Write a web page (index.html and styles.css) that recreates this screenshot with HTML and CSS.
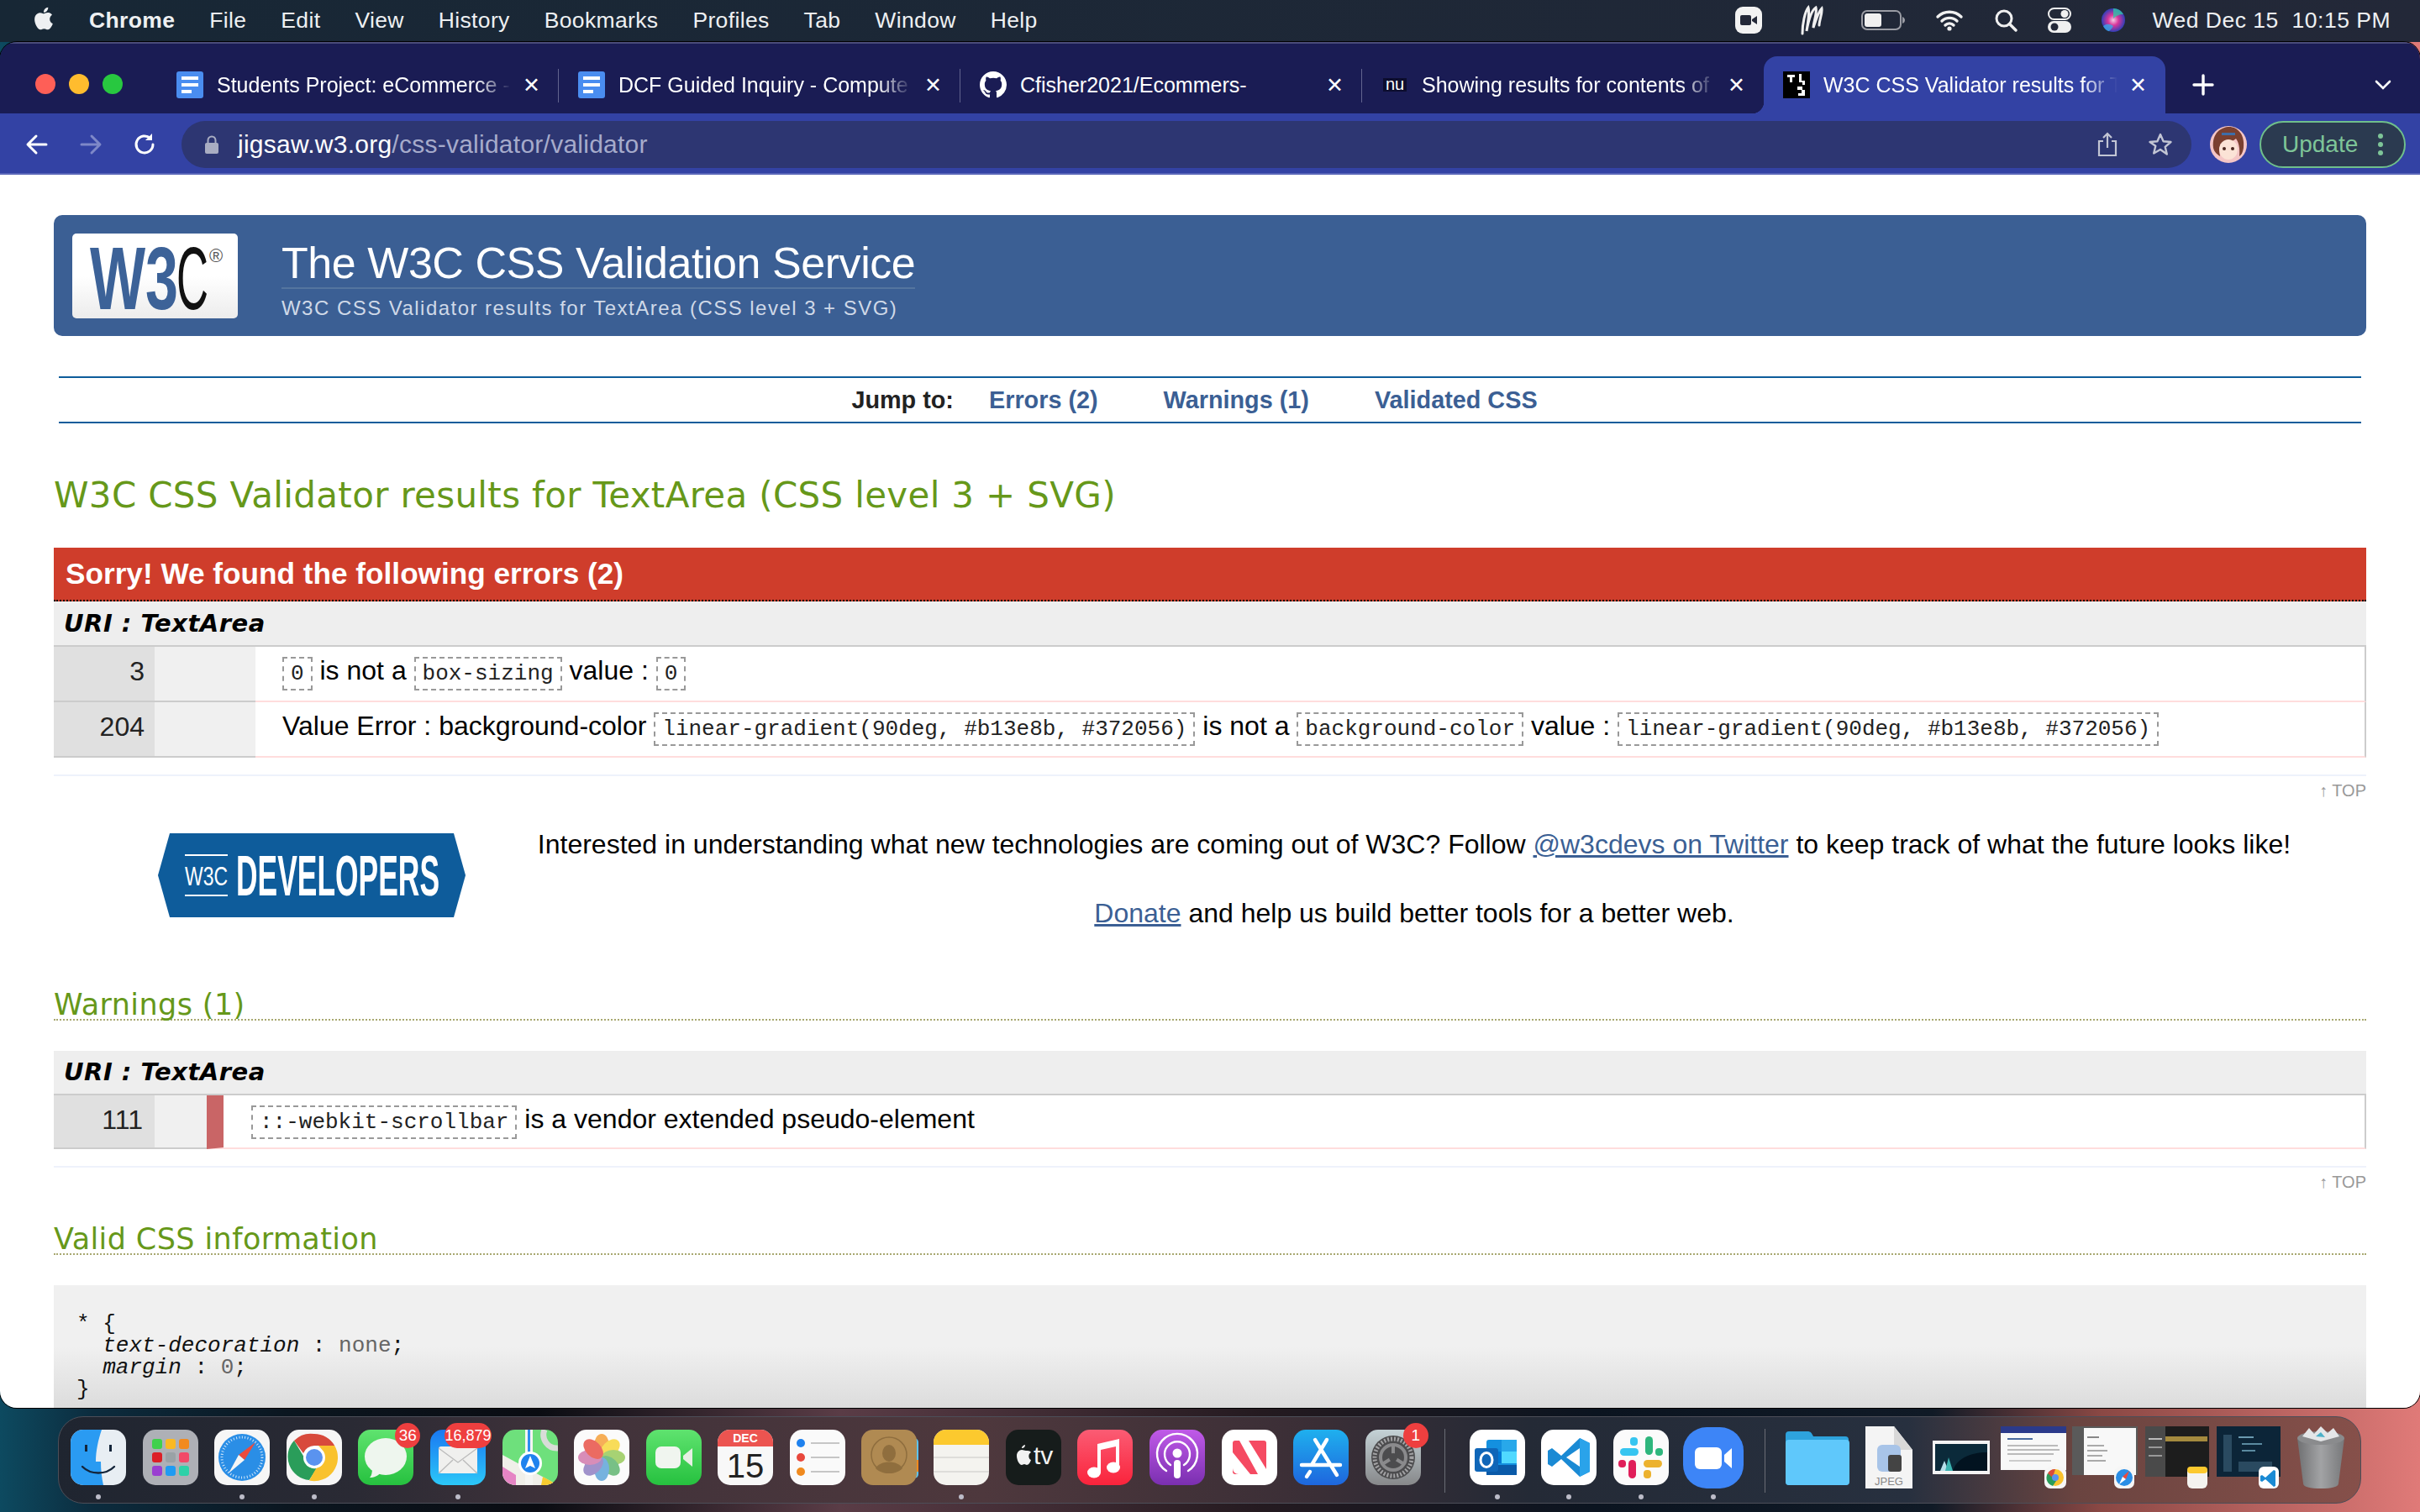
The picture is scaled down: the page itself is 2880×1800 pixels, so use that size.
FILE: index.html
```html
<!DOCTYPE html>
<html lang="en">
<head>
    <meta charset="UTF-8">
    <title>W3C CSS Validator results for TextArea</title>
    <link rel="stylesheet" href="styles.css">
</head>
<body>
    <!-- macOS menu bar -->
    <header class="menubar">
        <svg class="apple" viewBox="0 0 24 24" width="32" height="32"><path fill="#eef0f2" d="M18.71 19.5c-.83 1.24-1.71 2.45-3.05 2.47-1.34.03-1.77-.79-3.29-.79-1.53 0-2 .77-3.27.82-1.31.05-2.3-1.32-3.14-2.53C4.25 17 2.94 12.45 4.7 9.39c.87-1.52 2.43-2.48 4.12-2.51 1.28-.02 2.5.87 3.29.87.78 0 2.26-1.07 3.81-.91.65.03 2.47.26 3.64 1.98-.09.06-2.17 1.28-2.15 3.81.03 3.02 2.65 4.03 2.68 4.04-.03.07-.42 1.44-1.38 2.83M13 3.5c.73-.83 1.94-1.46 2.94-1.5.13 1.17-.34 2.35-1.04 3.19-.69.85-1.83 1.51-2.95 1.42-.15-1.15.41-2.35 1.05-3.11z"/></svg>
        <nav class="menu">
            <span class="menu-app">Chrome</span>
            <span>File</span>
            <span>Edit</span>
            <span>View</span>
            <span>History</span>
            <span>Bookmarks</span>
            <span>Profiles</span>
            <span>Tab</span>
            <span>Window</span>
            <span>Help</span>
        </nav>
        <div class="status">
            <svg class="status-wide" width="32" height="32" viewBox="0 0 32 32"><rect width="32" height="32" rx="9" fill="#f2f2f2"/><rect x="6" y="10" width="13" height="12" rx="2" fill="#232838"/><path d="M20 15l6-4v10l-6-4z" fill="#232838"/></svg>
            <svg class="status-wide" width="28" height="36" viewBox="0 0 28 36"><path d="M3 34C3 22 6 8 10 3c2 6-1 20-2 28C10 20 14 6 19 3c2 6-3 18-3 24C19 18 22 8 26 4c1 6-3 14-3 20" fill="none" stroke="#f0f0f0" stroke-width="3" stroke-linecap="round"/></svg>
            <svg width="52" height="24" viewBox="0 0 52 24"><rect x="1" y="1" width="46" height="22" rx="6" fill="none" stroke="#9a9ca4" stroke-width="2"/><rect x="4" y="4" width="20" height="16" rx="3" fill="#f0f0f0"/><path d="M49 8c2 1 3 2 3 4s-1 3-3 4z" fill="#9a9ca4"/></svg>
            <svg width="34" height="26" viewBox="0 0 34 26"><path d="M3 9a20 20 0 0 1 28 0M8 14a13 13 0 0 1 18 0M12 19a7 7 0 0 1 10 0" fill="none" stroke="#f0f0f0" stroke-width="3.4" stroke-linecap="round"/><circle cx="17" cy="23" r="2.6" fill="#f0f0f0"/></svg>
            <svg width="28" height="28" viewBox="0 0 28 28"><circle cx="12" cy="12" r="9" fill="none" stroke="#f0f0f0" stroke-width="3"/><path d="M18.5 18.5L26 26" stroke="#f0f0f0" stroke-width="3.4" stroke-linecap="round"/></svg>
            <svg width="28" height="30" viewBox="0 0 28 30"><rect x="1" y="1" width="26" height="13" rx="6.5" fill="none" stroke="#f0f0f0" stroke-width="2"/><circle cx="20" cy="7.5" r="4.5" fill="#f0f0f0"/><rect y="16" width="28" height="14" rx="7" fill="#f0f0f0"/><circle cx="8" cy="23" r="4.5" fill="#232838"/></svg>
            <svg width="28" height="28" viewBox="0 0 28 28"><defs><radialGradient id="siri"><stop offset="0" stop-color="#f2cce6"/><stop offset=".45" stop-color="#d8369a"/><stop offset="1" stop-color="#2f3fb8"/></radialGradient></defs><circle cx="14" cy="14" r="14" fill="url(#siri)"/><path d="M14 0a14 14 0 0 1 12 7c-5 0-9 2-12 5z" fill="#2ec4a8" opacity=".8"/><path d="M2 21c4-3 8-3 12 0-2 4-6 7-6 6-3-1-5-4-6-6z" fill="#38a8e8" opacity=".8"/></svg>
            <span class="clock">Wed Dec 15&nbsp;&nbsp;10:15 PM</span>
        </div>
    </header>

    <div class="window">
        <!-- tab strip -->
        <div class="tabstrip">
            <div class="traffic">
                <i class="light red"></i><i class="light yellow"></i><i class="light green"></i>
            </div>
            <div class="tab">
                <svg class="favicon" width="32" height="32" viewBox="0 0 32 32"><rect width="32" height="32" rx="3" fill="#4a8df0"/><rect x="6" y="6" width="20" height="4" fill="#fff"/><rect x="6" y="14" width="20" height="4" fill="#fff"/><rect x="6" y="22" width="12" height="4" fill="#fff"/></svg>
                <span class="tab-title fade">Students Project: eCommerce -</span>
                <span class="tab-close">&#10005;</span>
            </div>
            <div class="tab">
                <svg class="favicon" width="32" height="32" viewBox="0 0 32 32"><rect width="32" height="32" rx="3" fill="#4a8df0"/><rect x="6" y="6" width="20" height="4" fill="#fff"/><rect x="6" y="14" width="20" height="4" fill="#fff"/><rect x="6" y="22" width="12" height="4" fill="#fff"/></svg>
                <span class="tab-title fade">DCF Guided Inquiry - Compute</span>
                <span class="tab-close">&#10005;</span>
            </div>
            <div class="tab">
                <svg class="favicon" width="32" height="32" viewBox="0 0 16 16"><path fill="#fff" d="M8 0C3.58 0 0 3.58 0 8c0 3.54 2.29 6.53 5.47 7.59.4.07.55-.17.55-.38 0-.19-.01-.82-.01-1.49-2.01.37-2.53-.49-2.69-.94-.09-.23-.48-.94-.82-1.13-.28-.15-.68-.52-.01-.53.63-.01 1.08.58 1.23.82.72 1.21 1.87.87 2.33.66.07-.52.28-.87.51-1.07-1.78-.2-3.64-.89-3.64-3.95 0-.87.31-1.59.82-2.15-.08-.2-.36-1.02.08-2.12 0 0 .67-.21 2.2.82.64-.18 1.32-.27 2-.27.68 0 1.36.09 2 .27 1.53-1.04 2.2-.82 2.2-.82.44 1.1.16 1.92.08 2.12.51.56.82 1.27.82 2.15 0 3.07-1.87 3.75-3.65 3.95.29.25.54.73.54 1.48 0 1.07-.01 1.93-.01 2.2 0 .21.15.46.55.38A8.013 8.013 0 0016 8c0-4.42-3.58-8-8-8z"/></svg>
                <span class="tab-title">Cfisher2021/Ecommers-</span>
                <span class="tab-close">&#10005;</span>
            </div>
            <div class="tab tab-last">
                <svg class="favicon" width="32" height="32" viewBox="0 0 32 32"><rect x="2" y="8" width="28" height="16" fill="#0c0d2e"/><text x="16" y="22" text-anchor="middle" class="nu-mark">nu</text></svg>
                <span class="tab-title fade tab-title-nu">Showing results for contents of</span>
                <span class="tab-close">&#10005;</span>
            </div>
            <div class="tab tab-active">
                <svg class="favicon" width="32" height="32" viewBox="0 0 32 32"><rect width="32" height="32" fill="#000"/><path d="M5 4h9v3h-3v6H8V7H5zM19 3h3v8h4v5h-3v-3h-4zM17 18h6v4h3v7h-8v-3h4v-4h-5z" fill="#fff"/></svg>
                <span class="tab-title fade">W3C CSS Validator results for T</span>
                <span class="tab-close">&#10005;</span>
            </div>
            <svg class="tab-plus" width="28" height="28" viewBox="0 0 28 28"><path d="M14 3v22M3 14h22" stroke="#fff" stroke-width="3.4" stroke-linecap="round"/></svg>
            <svg class="tab-more" width="20" height="12" viewBox="0 0 20 12"><path d="M2 2l8 8 8-8" fill="none" stroke="#fff" stroke-width="2.6" stroke-linecap="round"/></svg>
        </div>

        <!-- toolbar -->
        <div class="toolbar">
            <svg class="nav-btn" width="30" height="30" viewBox="0 0 30 30"><path d="M26 15H5M14 5L4 15l10 10" fill="none" stroke="#fff" stroke-width="3" stroke-linecap="round" stroke-linejoin="round"/></svg>
            <svg class="nav-btn" width="30" height="30" viewBox="0 0 30 30"><path d="M4 15h21M16 5l10 10-10 10" fill="none" stroke="#7e88c8" stroke-width="3" stroke-linecap="round" stroke-linejoin="round"/></svg>
            <svg class="nav-btn" width="30" height="30" viewBox="0 0 30 30"><path d="M25 15a10 10 0 1 1-3.2-7.4" fill="none" stroke="#fff" stroke-width="3" stroke-linecap="round"/><path d="M24 2v8h-8z" fill="#fff"/></svg>
            <div class="omnibox">
                <svg width="16" height="22" viewBox="0 0 16 22"><rect y="9" width="16" height="13" rx="2" fill="#a9adc2"/><path d="M3.5 10V6a4.5 4.5 0 0 1 9 0v4" fill="none" stroke="#a9adc2" stroke-width="2"/></svg>
                <span class="url"><span class="url-host">jigsaw.w3.org</span>/css-validator/validator</span>
                <svg class="omni-share" width="24" height="30" viewBox="0 0 24 30"><path d="M7 11H2v17h20V11h-5M12 19V2M7 7l5-5 5 5" fill="none" stroke="#c2c5d4" stroke-width="2.2"/></svg>
                <svg class="omni-star" width="30" height="30" viewBox="0 0 30 30"><path d="M15 3l3.6 8.2 8.9.8-6.8 5.8 2.1 8.7L15 21l-7.800 4.500 2.100-8.700L2.500 12l8.900-.8z" fill="none" stroke="#c2c5d4" stroke-width="2.4" stroke-linejoin="round"/></svg>
            </div>
            <svg class="avatar" width="44" height="44" viewBox="0 0 44 44"><circle cx="22" cy="22" r="22" fill="#f4c6c6"/><path d="M4 26C2 8 14 1 23 1s19 8 17 25c-1 6-3 9-5 10 1-10-1-17-4-21-6 5-13 6-18 6-2 4-2 10-1 15-3-2-7-5-8-10z" fill="#7a4030"/><ellipse cx="22" cy="28" rx="11" ry="12" fill="#fbe3d6"/><rect x="14" y="8" width="16" height="3" fill="#3d6ea8"/><circle cx="17" cy="27" r="2" fill="#4a2820"/><circle cx="27" cy="27" r="2" fill="#4a2820"/></svg>
            <div class="update-btn">
                <span>Update</span>
                <svg width="6" height="26" viewBox="0 0 6 26"><circle cx="3" cy="3" r="3" fill="#7ec598"/><circle cx="3" cy="13" r="3" fill="#7ec598"/><circle cx="3" cy="23" r="3" fill="#7ec598"/></svg>
            </div>
        </div>

        <!-- validator page -->
        <main class="page">
            <div class="banner">
                <div class="w3c-logo">
                    <svg width="197" height="101" viewBox="0 0 197 101"><text x="21" y="90" textLength="105" lengthAdjust="spacingAndGlyphs" class="w3c-mark">W3</text><text x="124" y="90" textLength="38" lengthAdjust="spacingAndGlyphs" class="w3c-c">C</text><text x="163" y="34" class="w3c-reg">&#174;</text></svg>
                </div>
                <div class="banner-text">
                    <h1 class="banner-title">The W3C CSS Validation Service</h1>
                    <p class="banner-sub">W3C CSS Validator results for TextArea (CSS level 3 + SVG)</p>
                </div>
            </div>

            <div class="jump">
                <span class="jump-label">Jump to:</span>
                <a href="#errors">Errors (2)</a>
                <a href="#warnings">Warnings (1)</a>
                <a href="#css">Validated CSS</a>
            </div>

            <h2 class="result-title">W3C CSS Validator results for TextArea (CSS level 3 + SVG)</h2>

            <section id="errors">
                <h3 class="error-head">Sorry! We found the following errors (2)</h3>
                <h4 class="uri">URI : TextArea</h4>
                <div class="row">
                    <div class="line-no">3</div>
                    <div class="line-pad"></div>
                    <div class="msg"><code>0</code> is not a <code>box-sizing</code> value : <code>0</code></div>
                </div>
                <div class="row">
                    <div class="line-no">204</div>
                    <div class="line-pad"></div>
                    <div class="msg">Value Error : background-color <code>linear-gradient(90deg, #b13e8b, #372056)</code> is not a <code>background-color</code> value : <code>linear-gradient(90deg, #b13e8b, #372056)</code></div>
                </div>
            </section>

            <div class="top-row"><a href="#errors">&#8593; TOP</a></div>

            <div class="promo">
                <svg class="dev-logo" width="366" height="100" viewBox="0 0 366 100">
                    <polygon points="14,0 352,0 366,50 352,100 14,100 0,50" fill="#0e5c9b"/>
                    <rect x="32" y="25" width="51" height="2" fill="#fff"/>
                    <rect x="32" y="73" width="51" height="2" fill="#fff"/>
                    <text x="32" y="62" textLength="51" lengthAdjust="spacingAndGlyphs" class="dev-w3c">W3C</text>
                    <text x="93" y="74" textLength="242" lengthAdjust="spacingAndGlyphs" class="dev-word">DEVELOPERS</text>
                </svg>
                <div class="promo-text">
                    <p>Interested in understanding what new technologies are coming out of W3C? Follow <a href="#">@w3cdevs on Twitter</a> to keep track of what the future looks like!</p>
                    <p><a href="#">Donate</a> and help us build better tools for a better web.</p>
                </div>
            </div>

            <section id="warnings">
                <h3 class="section-title">Warnings (1)</h3>
                <h4 class="uri uri-warn">URI : TextArea</h4>
                <div class="row row-warn">
                    <div class="line-no line-no-warn">111</div>
                    <div class="line-pad line-pad-warn"></div>
                    <div class="msg msg-warn"><code>::-webkit-scrollbar</code> is a vendor extended pseudo-element</div>
                </div>
            </section>

            <div class="top-row"><a href="#warnings">&#8593; TOP</a></div>

            <h3 class="section-title section-valid" id="css">Valid CSS information</h3>
            <pre class="css-dump">* {
  <em>text-decoration</em> : <span class="val">none</span>;
  <em>margin</em> : <span class="val">0</span>;
}</pre>
        </main>
    </div>

    <!-- dock -->
    <footer class="desktop">
        <div class="dock">
            <div class="dock-item running">
                <svg width="66" height="66" viewBox="0 0 66 66"><rect width="66" height="66" rx="15" fill="#e8eef3"/><path d="M15 0h22c-4 12-7 25-7 38h6c0 10 1 19 3 28H15A15 15 0 0 1 0 51V15A15 15 0 0 1 15 0z" fill="#2a9bf2"/><path d="M14 44c10 10 28 10 38 0" fill="none" stroke="#14253a" stroke-width="2.4" stroke-linecap="round"/><rect x="17" y="18" width="3" height="8" fill="#14253a"/><rect x="46" y="18" width="3" height="8" fill="#14253a"/></svg>
            </div>
            <div class="dock-item">
                <svg width="66" height="66" viewBox="0 0 66 66"><rect width="66" height="66" rx="15" fill="#aeb0b6"/><rect x="11" y="11" width="12" height="12" rx="3" fill="#3fd14c"/><rect x="27" y="11" width="12" height="12" rx="3" fill="#fbb923"/><rect x="43" y="11" width="12" height="12" rx="3" fill="#f28a1e"/><rect x="11" y="27" width="12" height="12" rx="3" fill="#dc1f26"/><rect x="27" y="27" width="12" height="12" rx="3" fill="#9aa2a6"/><rect x="43" y="27" width="12" height="12" rx="3" fill="#f24a68"/><rect x="11" y="43" width="12" height="12" rx="3" fill="#9a3fd1"/><rect x="27" y="43" width="12" height="12" rx="3" fill="#1f9bf2"/><rect x="43" y="43" width="12" height="12" rx="3" fill="#2ed1a8"/></svg>
            </div>
            <div class="dock-item running">
                <svg width="66" height="66" viewBox="0 0 66 66"><rect width="66" height="66" rx="15" fill="#f6f6f6"/><circle cx="33" cy="33" r="28" fill="#2a8ee6"/><circle cx="33" cy="33" r="24" fill="none" stroke="#d4e8fa" stroke-width="3" stroke-dasharray="1 2.4"/><path d="M49 15L29 30l7 6z" fill="#ec4b3d"/><path d="M17 52l12-22 7 6z" fill="#f5f5f5"/></svg>
            </div>
            <div class="dock-item running">
                <svg width="66" height="66" viewBox="0 0 66 66"><rect width="66" height="66" rx="15" fill="#f6f6f6"/><path d="M33 5a28 28 0 0 1 24.200 14H33a14 14 0 0 0-13 9L9 13a28 28 0 0 1 24-8z" fill="#d84a3c"/><path d="M9 13l12 20a13 13 0 0 0 15 13L27 60A28 28 0 0 1 9 13z" fill="#2a9d5a"/><path d="M57.200 19A28 28 0 0 1 27 60.500L41 36a13 13 0 0 0-3-17z" fill="#f9c22e"/><circle cx="33" cy="33" r="13" fill="#fff"/><circle cx="33" cy="33" r="10" fill="#5a93ef"/></svg>
            </div>
            <div class="dock-item">
                <svg width="66" height="66" viewBox="0 0 66 66"><defs><linearGradient id="msg" x1="0" y1="0" x2="0" y2="1"><stop offset="0" stop-color="#5fe36f"/><stop offset="1" stop-color="#26c13f"/></linearGradient></defs><rect width="66" height="66" rx="15" fill="url(#msg)"/><ellipse cx="33" cy="32" rx="25" ry="22" fill="#eef6ee"/><path d="M17 46c0 5-1 9-3 11 5 0 10-2 13-6z" fill="#eef6ee"/></svg>
                <span class="badge badge-msg">36</span>
            </div>
            <div class="dock-item running">
                <svg width="66" height="66" viewBox="0 0 66 66"><defs><linearGradient id="mail" x1="0" y1="0" x2="0" y2="1"><stop offset="0" stop-color="#1a78f2"/><stop offset="1" stop-color="#2cc8f8"/></linearGradient></defs><rect width="66" height="66" rx="15" fill="url(#mail)"/><rect x="10" y="20" width="46" height="32" rx="3" fill="#f0f0ee"/><path d="M10 22l23 17 23-17M10 52l17-16M56 52L39 36" fill="none" stroke="#bcbcbc" stroke-width="1.4"/></svg>
                <span class="badge badge-mail">16,879</span>
            </div>
            <div class="dock-item">
                <svg width="66" height="66" viewBox="0 0 66 66"><defs><clipPath id="sq"><rect width="66" height="66" rx="15"/></clipPath></defs><g clip-path="url(#sq)"><rect width="66" height="66" fill="#6ee07c"/><path d="M0 30l66 36H0z" fill="#f0efe9"/><path d="M0 44l16 10v12H0z" fill="#e585c4"/><path d="M48 56l18 10H46z" fill="#f7cb2f"/><path d="M27 0h9v66h-9z" fill="#f5f5f2"/><path d="M30 0h3v30h-3z" fill="#2c8ef0"/><path d="M50 0a16 16 0 0 0 16 22" fill="none" stroke="#d8dcd8" stroke-width="7"/><circle cx="33" cy="40" r="14" fill="#fff"/><circle cx="33" cy="40" r="11" fill="#1f82ee"/><path d="M33 31l6 15-6-3-6 3z" fill="#fff"/></g></svg>
            </div>
            <div class="dock-item">
                <svg width="66" height="66" viewBox="0 0 66 66"><rect width="66" height="66" rx="15" fill="#fbfbfb"/><g opacity=".8"><ellipse cx="33" cy="19" rx="9" ry="14" fill="#f59b30"/><ellipse cx="33" cy="19" rx="9" ry="14" fill="#f8d531" transform="rotate(45 33 33)"/><ellipse cx="33" cy="19" rx="9" ry="14" fill="#93c852" transform="rotate(90 33 33)"/><ellipse cx="33" cy="19" rx="9" ry="14" fill="#58b26a" transform="rotate(135 33 33)"/><ellipse cx="33" cy="19" rx="9" ry="14" fill="#56a0d8" transform="rotate(180 33 33)"/><ellipse cx="33" cy="19" rx="9" ry="14" fill="#8a78c0" transform="rotate(225 33 33)"/><ellipse cx="33" cy="19" rx="9" ry="14" fill="#d072a8" transform="rotate(270 33 33)"/><ellipse cx="33" cy="19" rx="9" ry="14" fill="#e8483c" transform="rotate(315 33 33)"/></g></svg>
            </div>
            <div class="dock-item">
                <svg width="66" height="66" viewBox="0 0 66 66"><defs><linearGradient id="ft" x1="0" y1="0" x2="0" y2="1"><stop offset="0" stop-color="#5fe36f"/><stop offset="1" stop-color="#26c13f"/></linearGradient></defs><rect width="66" height="66" rx="15" fill="url(#ft)"/><rect x="11" y="20" width="30" height="26" rx="7" fill="#f0f5ef"/><path d="M44 31l11-9v22l-11-9z" fill="#e6efe4"/></svg>
            </div>
            <div class="dock-item">
                <svg width="66" height="66" viewBox="0 0 66 66"><defs><clipPath id="cal"><rect width="66" height="66" rx="15"/></clipPath></defs><g clip-path="url(#cal)"><rect width="66" height="66" fill="#f8f8f8"/><rect width="66" height="20" fill="#ec5450"/></g><text x="33" y="15" class="cal-month">DEC</text><text x="33" y="57" class="cal-day">15</text></svg>
            </div>
            <div class="dock-item">
                <svg width="66" height="66" viewBox="0 0 66 66"><rect width="66" height="66" rx="15" fill="#fafafa"/><circle cx="13" cy="16" r="5" fill="#1f82ee"/><circle cx="13" cy="33" r="5" fill="#e8483c"/><circle cx="13" cy="50" r="5" fill="#f08a1e"/><path d="M25 16h34M25 33h34M25 50h34" stroke="#c6c6c6" stroke-width="2"/></svg>
            </div>
            <div class="dock-item">
                <svg width="68" height="66" viewBox="0 0 68 66"><rect x="56" y="10" width="12" height="48" rx="5" fill="#5cc3f0"/><rect x="56" y="36" width="12" height="14" fill="#f08a1e"/><rect width="66" height="66" rx="14" fill="#b08a52"/><circle cx="33" cy="30" r="21" fill="none" stroke="#8f6e3e" stroke-width="1.5"/><ellipse cx="33" cy="28" rx="8" ry="10" fill="#8f6e3e"/><path d="M17 46c5-10 27-10 32 0-8 8-24 8-32 0z" fill="#8f6e3e"/></svg>
            </div>
            <div class="dock-item running">
                <svg width="66" height="66" viewBox="0 0 66 66"><defs><clipPath id="nt"><rect width="66" height="66" rx="15"/></clipPath></defs><g clip-path="url(#nt)"><rect width="66" height="66" fill="#f4f3ef"/><rect width="66" height="18" fill="#fcc92e"/><path d="M0 33h66M0 50h66" stroke="#d6d6d4" stroke-width="1.5"/></g></svg>
            </div>
            <div class="dock-item">
                <svg width="66" height="66" viewBox="0 0 66 66"><rect width="66" height="66" rx="15" fill="#161c1b"/><path d="M19 21c1-2 3-3 4-3 0 2-1 4-4 4zM24 25c-2 0-3-1-5-1-3 0-6 3-6 7 0 5 3 11 6 11 1 0 2-1 3-1s2 1 3 1c2 0 4-3 5-6-3-1-4-7 0-9-1-2-4-2-6-2z" fill="#f2f2f2"/><text x="33" y="41" class="tv-mark">tv</text></svg>
            </div>
            <div class="dock-item">
                <svg width="66" height="66" viewBox="0 0 66 66"><defs><linearGradient id="mus" x1="0" y1="0" x2="0" y2="1"><stop offset="0" stop-color="#fb5c74"/><stop offset="1" stop-color="#fa233b"/></linearGradient></defs><rect width="66" height="66" rx="15" fill="url(#mus)"/><path d="M24 17l26-6v33h-4V20l-18 4v27h-4z" fill="#fff"/><ellipse cx="20" cy="51" rx="8" ry="6.500" fill="#fff"/><ellipse cx="43" cy="45" rx="8" ry="6.500" fill="#fff"/></svg>
            </div>
            <div class="dock-item">
                <svg width="66" height="66" viewBox="0 0 66 66"><defs><linearGradient id="pod" x1="0" y1="0" x2="0" y2="1"><stop offset="0" stop-color="#c05ae8"/><stop offset="1" stop-color="#7a2fb0"/></linearGradient></defs><rect width="66" height="66" rx="15" fill="url(#pod)"/><path d="M20 49a24 24 0 1 1 26 0M25 42a15 15 0 1 1 16 0" fill="none" stroke="#fff" stroke-width="2.4" stroke-linecap="round"/><circle cx="33" cy="28" r="5.500" fill="#fff"/><rect x="29" y="36" width="8" height="22" rx="4" fill="#fff"/></svg>
            </div>
            <div class="dock-item">
                <svg width="66" height="66" viewBox="0 0 66 66"><rect width="66" height="66" rx="15" fill="#fff"/><rect x="13" y="13" width="40" height="40" rx="3" fill="#f54a62"/><path d="M21 13h11l21 34v6H43zM13 27l21 26H20a7 7 0 0 1-7-7z" fill="#fff"/></svg>
            </div>
            <div class="dock-item">
                <svg width="66" height="66" viewBox="0 0 66 66"><defs><linearGradient id="app" x1="0" y1="0" x2="0" y2="1"><stop offset="0" stop-color="#1fb0ee"/><stop offset="1" stop-color="#1e66de"/></linearGradient></defs><rect width="66" height="66" rx="15" fill="url(#app)"/><path d="M26 12l26 42M40 12L22 42M10 42h46M20 50l-4 6" fill="none" stroke="#fff" stroke-width="4.400" stroke-linecap="round"/></svg>
            </div>
            <div class="dock-item">
                <svg width="66" height="66" viewBox="0 0 66 66"><defs><linearGradient id="set" x1="0" y1="0" x2="0" y2="1"><stop offset="0" stop-color="#c4d2d6"/><stop offset="1" stop-color="#87888a"/></linearGradient></defs><rect width="66" height="66" rx="15" fill="url(#set)"/><circle cx="33" cy="33" r="26" fill="#4c4c4e"/><circle cx="33" cy="33" r="22" fill="none" stroke="#a2a2a4" stroke-width="5" stroke-dasharray="2 2"/><circle cx="33" cy="33" r="15" fill="none" stroke="#8a8a8c" stroke-width="4"/><path d="M33 33V18M33 33L20 41M33 33l13 8" stroke="#8a8a8c" stroke-width="4"/><circle cx="33" cy="33" r="5" fill="#4c4c4e"/></svg>
                <span class="badge badge-set">1</span>
            </div>

            <div class="dock-sep"></div>

            <div class="dock-item running">
                <svg width="66" height="66" viewBox="0 0 66 66"><rect width="66" height="66" rx="15" fill="#fff"/><rect x="20" y="12" width="36" height="42" rx="3" fill="#1490df"/><rect x="38" y="12" width="18" height="14" fill="#28a8ea"/><rect x="38" y="26" width="18" height="14" fill="#50d9ff"/><rect x="20" y="26" width="18" height="14" fill="#0078d4"/><path d="M20 42h36v12H20z" fill="#0a5aa8"/><rect x="6" y="22" width="28" height="28" rx="3" fill="#0f66b8"/><ellipse cx="20" cy="36" rx="7" ry="8.500" fill="none" stroke="#fff" stroke-width="3"/></svg>
            </div>
            <div class="dock-item running">
                <svg width="66" height="66" viewBox="0 0 66 66"><rect width="66" height="66" rx="15" fill="#fff"/><path d="M46 10L24 31 13 22l-5 3v16l5 3 11-9 22 21 12-6V16z" fill="#1a8ad4"/><path d="M46 22L30 33l16 11z" fill="#fff"/><path d="M46 10l12 6v34l-12 6z" fill="#2aa3ea"/></svg>
            </div>
            <div class="dock-item running">
                <svg width="66" height="66" viewBox="0 0 66 66"><rect width="66" height="66" rx="15" fill="#fbfbfb"/><rect x="38" y="8" width="9" height="22" rx="4.500" fill="#2eb67d"/><rect x="50" y="22" width="9" height="9" rx="4" fill="#2eb67d"/><rect x="8" y="22" width="22" height="9" rx="4.500" fill="#36c5f0"/><rect x="20" y="9" width="9" height="10" rx="4" fill="#36c5f0"/><rect x="18" y="36" width="9" height="22" rx="4.500" fill="#e01e5a"/><rect x="6" y="36" width="9" height="9" rx="4" fill="#e01e5a"/><rect x="36" y="36" width="22" height="9" rx="4.500" fill="#ecb22e"/><rect x="36" y="48" width="9" height="10" rx="4" fill="#ecb22e"/></svg>
            </div>
            <div class="dock-item running">
                <svg width="72" height="73" viewBox="0 0 72 73"><rect width="72" height="73" rx="28" fill="#3d85f7"/><rect x="14" y="24" width="32" height="26" rx="6" fill="#fff"/><path d="M49 33l9-8v24l-9-8z" fill="#fff"/></svg>
            </div>

            <div class="dock-sep"></div>

            <div class="dock-item">
                <svg width="76" height="66" viewBox="0 0 76 66"><path d="M4 2h22c4 0 5 2 7 6h38a4 4 0 0 1 4 4v50a4 4 0 0 1-4 4H4a4 4 0 0 1-4-4V6a4 4 0 0 1 4-4z" fill="#2ea3dd"/><rect y="12" width="76" height="54" rx="4" fill="#5fc8fb"/></svg>
            </div>
            <div class="dock-item">
                <svg width="56" height="74" viewBox="0 0 56 74"><path d="M0 0h34l22 28v46H0z" fill="#f4f4f4"/><path d="M34 0l22 28H34z" fill="#d8d8d8"/><rect x="14" y="22" width="28" height="32" rx="6" fill="#a8c4e8"/><rect x="27" y="34" width="16" height="20" rx="3" fill="#444"/><text x="28" y="70" class="jpeg-label">JPEG</text></svg>
            </div>
            <div class="dock-item">
                <svg width="68" height="40" viewBox="0 0 68 40"><rect width="68" height="40" fill="#f4f4f4"/><rect x="3" y="4" width="62" height="32" fill="#0b2a3a"/><path d="M24 36c4-14 20-22 41-22v22z" fill="#021320"/><path d="M9 36l5-12 5 12z" fill="#b6e0ea"/><path d="M15 36l4-16 5 16z" fill="#3bb3b0"/></svg>
            </div>
            <div class="dock-item">
                <svg width="78" height="74" viewBox="0 0 78 74"><rect y="0" width="78" height="52" fill="#f8f8f8"/><rect width="78" height="8" fill="#2b3a8a"/><rect x="8" y="14" width="30" height="2" fill="#4a6a9e"/><rect x="8" y="22" width="60" height="2" fill="#bbb"/><rect x="8" y="27" width="62" height="2" fill="#bbb"/><rect x="8" y="32" width="55" height="2" fill="#bbb"/><rect x="10" y="40" width="50" height="2" fill="#ccc"/><rect x="52" y="48" width="26" height="26" rx="7" fill="#f6f6f6"/><circle cx="65" cy="61" r="10" fill="#f9c22e"/><path d="M65 51a10 10 0 0 0-9 5l5 8z" fill="#d84a3c"/><path d="M56 56a10 10 0 0 0 6 15l4-6z" fill="#2a9d5a"/><circle cx="65" cy="61" r="4" fill="#5a93ef"/></svg>
            </div>
            <div class="dock-item">
                <svg width="78" height="74" viewBox="0 0 78 74"><rect y="0" width="78" height="58" fill="#5a5a5a"/><rect x="14" y="2" width="62" height="56" fill="#f8f8f8"/><rect x="18" y="12" width="14" height="2" fill="#888"/><rect x="18" y="22" width="20" height="2" fill="#aaa"/><rect x="18" y="28" width="24" height="2" fill="#aaa"/><rect x="18" y="34" width="18" height="2" fill="#aaa"/><rect x="18" y="40" width="22" height="2" fill="#aaa"/><rect x="50" y="48" width="24" height="26" rx="7" fill="#f6f6f6"/><circle cx="62" cy="61" r="10" fill="#2a8ee6"/><path d="M68 53l-8 7 4 3z" fill="#ec4b3d"/><path d="M56 69l4-9 4 3z" fill="#fff"/></svg>
            </div>
            <div class="dock-item">
                <svg width="76" height="74" viewBox="0 0 76 74"><rect y="0" width="76" height="60" fill="#1d1d1d"/><rect width="24" height="60" fill="#4a4a4a"/><rect x="24" y="12" width="50" height="6" fill="#a58a3e"/><rect x="4" y="14" width="16" height="2" fill="#bbb"/><rect x="4" y="24" width="16" height="2" fill="#999"/><rect x="4" y="34" width="16" height="2" fill="#999"/><rect x="50" y="48" width="24" height="26" rx="6" fill="#f4f3ef"/><rect x="50" y="48" width="24" height="8" rx="4" fill="#fcc92e"/></svg>
            </div>
            <div class="dock-item">
                <svg width="76" height="74" viewBox="0 0 76 74"><rect y="0" width="76" height="60" fill="#0c2538"/><rect x="8" y="10" width="10" height="44" fill="#2a4a60"/><rect x="26" y="12" width="18" height="2" fill="#6a9ab0"/><rect x="30" y="20" width="24" height="2" fill="#5a8aa0"/><rect x="30" y="28" width="16" height="2" fill="#5a8aa0"/><rect x="26" y="42" width="40" height="12" fill="#2a4a60"/><rect x="50" y="48" width="24" height="26" rx="6" fill="#fff"/><path d="M68 52L58 61l-4-3-2 1v6l2 1 4-3 10 9 2-1V53z" fill="#1a8ad4"/></svg>
            </div>
            <div class="dock-item">
                <svg width="60" height="74" viewBox="0 0 60 74"><defs><linearGradient id="trash" x1="0" y1="0" x2="1" y2="0"><stop offset="0" stop-color="#6f7072"/><stop offset=".5" stop-color="#a2a3a5"/><stop offset="1" stop-color="#77787a"/></linearGradient></defs><path d="M2 14h56l-7 54c0 4-8 6-21 6s-21-2-21-6z" fill="url(#trash)"/><ellipse cx="30" cy="14" rx="28" ry="8" fill="#8a8b8d"/><path d="M8 12l8-10 6 7 8-9 8 8 7-6 7 10-22 6z" fill="#e4e6e8"/><path d="M24 12l6-5 5 6z" fill="#4bb0c8"/></svg>
            </div>
        </div>
    </footer>
</body>
</html>
```

FILE: styles.css
```css
* {
    box-sizing: border-box;
}

html, body {
    margin: 0;
    padding: 0;
}

body {
    width: 2880px;
    height: 1800px;
    overflow: hidden;
    display: flex;
    flex-direction: column;
    font-family: "Liberation Sans", Arial, sans-serif;
    background: linear-gradient(90deg, #0d4a60 0, #0c2c3e 110px, #0b1620 340px, #0a0c12 640px, #5a3c46 1000px, #241a20 1500px, #0b1420 1900px, #101a26 2300px, #8a4844 2500px, #e07a78 2880px);
}

/* menu bar */
.menubar {
    height: 50px;
    flex-shrink: 0;
    display: flex;
    align-items: center;
    padding: 0 35px 2px 36px;
    background: linear-gradient(90deg, #172735, #232838);
    color: #eef0f2;
    font-size: 26.5px;
}

.apple {
    margin-right: 38px;
    margin-top: -4px;
}

.menu {
    display: flex;
    gap: 41px;
    letter-spacing: .35px;
}

.menu-app {
    font-weight: bold;
}

.status {
    margin-left: auto;
    display: flex;
    align-items: center;
    gap: 36px;
}

.status-wide {
    margin-right: 9px;
}

.clock {
    margin-left: -3px;
    letter-spacing: .5px;
}

/* browser window */
.window {
    height: 1626px;
    flex-shrink: 0;
    display: flex;
    flex-direction: column;
    border-radius: 20px;
    overflow: hidden;
    box-shadow: 0 0 0 1px #000;
}

.tabstrip {
    height: 85px;
    flex-shrink: 0;
    display: flex;
    align-items: flex-end;
    background: #1a1c54;
    border-top: 2px solid #4a4c7a;
    color: #fff;
    font-size: 25px;
}

.traffic {
    width: 187px;
    height: 68px;
    flex-shrink: 0;
    display: flex;
    align-items: center;
    gap: 16px;
    padding-left: 42px;
    padding-bottom: 2px;
}

.light {
    width: 24px;
    height: 24px;
    border-radius: 50%;
}

.red { background: #fe5f57; }
.yellow { background: #ffbc2e; }
.green { background: #28c840; }

.tab {
    width: 478px;
    height: 68px;
    flex-shrink: 0;
    position: relative;
    display: flex;
    align-items: center;
    padding: 0 21px 0 23px;
}

.tab::after {
    content: "";
    position: absolute;
    right: 0;
    top: 15px;
    height: 40px;
    width: 1px;
    background: #62648e;
}

.tab-last::after,
.tab-active::after {
    display: none;
}

.favicon {
    flex-shrink: 0;
}

.nu-mark {
    font-family: "Liberation Sans", sans-serif;
    font-size: 20px;
    fill: #fff;
}

.tab-title {
    flex: 1;
    margin-left: 16px;
    white-space: nowrap;
    overflow: hidden;
}

.tab-title-nu {
    margin-left: 16px;
}

.fade {
    -webkit-mask-image: linear-gradient(90deg, #000 88%, transparent 100%);
    mask-image: linear-gradient(90deg, #000 88%, transparent 100%);
}

.tab-close {
    width: 24px;
    margin-left: 12px;
    font-size: 25px;
    text-align: center;
}

.tab-active {
    background: #3342a4;
    border-radius: 16px 16px 0 0;
}

.tab-active::before {
    content: "";
    position: absolute;
    left: -14px;
    bottom: 0;
    width: 14px;
    height: 14px;
    background: radial-gradient(circle at 0 0, transparent 14px, #3342a4 14.5px);
}

.tab-plus {
    margin: 0 0 20px 31px;
}

.tab-more {
    margin: 0 34px 28px auto;
}

.toolbar {
    height: 73px;
    flex-shrink: 0;
    display: flex;
    align-items: center;
    padding: 2px 17px 0 0;
    background: #3342a4;
    border-bottom: 2px solid #5a66b8;
}

.nav-btn {
    margin-left: 29px;
    margin-right: 5px;
}

.omnibox {
    margin-left: 24px;
    width: 2392px;
    height: 56px;
    flex-shrink: 0;
    display: flex;
    align-items: center;
    padding: 0 22px 0 28px;
    border-radius: 28px;
    background: #2d3672;
}

.url {
    margin-left: 23px;
    font-size: 30px;
    letter-spacing: .25px;
    color: #a6abcb;
}

.url-host {
    color: #fff;
}

.omni-share {
    margin-left: auto;
}

.omni-star {
    margin-left: 36px;
}

.avatar {
    margin-left: 22px;
    flex-shrink: 0;
}

.update-btn {
    margin-left: 15px;
    width: 174px;
    height: 56px;
    flex-shrink: 0;
    display: flex;
    align-items: center;
    justify-content: space-between;
    padding: 0 25px;
    border: 2px solid #6fbf8b;
    border-radius: 28px;
    background: #2b3a50;
    color: #7ec598;
    font-size: 28px;
}

/* validator page */
.page {
    flex: 1;
    min-height: 0;
    display: flex;
    flex-direction: column;
    background: #fff;
    color: #000;
    font-size: 32px;
    line-height: 36px;
}

.banner {
    margin: 48px 64px 0;
    height: 144px;
    flex-shrink: 0;
    display: flex;
    align-items: center;
    padding-left: 22px;
    border-radius: 10px;
    background: #3b5f94;
}

.w3c-logo {
    width: 197px;
    height: 101px;
    border-radius: 5px;
    background: linear-gradient(#fff 50%, #ececec);
}

.w3c-mark {
    font-family: "Liberation Sans", sans-serif;
    font-size: 105px;
    font-weight: bold;
    fill: #3c6298;
}

.w3c-c {
    font-family: "Liberation Sans", sans-serif;
    font-size: 105px;
    fill: #111;
}

.w3c-reg {
    font-family: "Liberation Sans", sans-serif;
    font-size: 22px;
    fill: #555;
}

.banner-text {
    margin-left: 52px;
    margin-top: 10px;
}

.banner-title {
    margin: 0;
    padding-bottom: 1px;
    border-bottom: 2px solid #54759f;
    color: #fff;
    font-size: 52px;
    font-weight: normal;
    line-height: 56px;
    letter-spacing: -.45px;
}

.banner-sub {
    margin: 9px 0 0;
    color: #cfd9e8;
    font-size: 24px;
    line-height: 28px;
    letter-spacing: 1.47px;
}

.jump {
    margin: 48px 70px 0;
    height: 56px;
    flex-shrink: 0;
    display: flex;
    align-items: center;
    justify-content: center;
    gap: 78px;
    padding-right: 37px;
    border-top: 2px solid #0e5c9b;
    border-bottom: 2px solid #0e5c9b;
    font-size: 28.8px;
    font-weight: bold;
    color: #222;
}

.jump a {
    color: #3b5f94;
    text-decoration: none;
}

.jump-label {
    margin-right: -36px;
}

.result-title {
    margin: 56px 64px 32px;
    color: #66981a;
    font-family: "DejaVu Sans", Verdana, sans-serif;
    font-size: 42px;
    font-weight: normal;
    line-height: 60px;
    letter-spacing: .32px;
    flex-shrink: 0;
}

section {
    margin: 0 64px;
    flex-shrink: 0;
}

.error-head {
    margin: 0;
    height: 64px;
    padding: 0 14px;
    border-bottom: 2px dotted #000;
    background: #cf3d2b;
    color: #fff;
    font-size: 35.2px;
    font-weight: bold;
    line-height: 62px;
}

.uri {
    margin: 0;
    height: 54px;
    padding: 0 12px;
    border-bottom: 2px solid #ccc;
    background: #eee;
    font-family: "DejaVu Sans", Verdana, sans-serif;
    font-size: 29px;
    font-style: italic;
    font-weight: bold;
    line-height: 52px;
    letter-spacing: .5px;
}

.uri-warn {
    margin-top: 36px;
    height: 53px;
    line-height: 50px;
}

.row {
    height: 66px;
    display: flex;
    font-size: 32px;
}

.row-warn {
    height: 64px;
}

.line-no {
    width: 120px;
    padding: 11px 12px 0 0;
    text-align: right;
    background: #e0e0e0;
    color: #222;
    border-bottom: 2px solid #ccc;
}

.line-no-warn {
    padding-right: 14px;
}

.line-pad {
    width: 120px;
    background: #f0f0f0;
    border-bottom: 2px solid #ccc;
}

.line-pad-warn {
    width: 62px;
}

.msg {
    flex: 1;
    padding: 10px 0 0 32px;
    border-bottom: 2px solid #fdd;
    border-right: 2px solid #ccc;
    white-space: nowrap;
}

.msg-warn {
    border-left: 20px solid #c96566;
    padding-left: 33px;
}

code {
    display: inline-block;
    height: 40px;
    padding: 0 8px;
    border: 2px dashed #999;
    font-family: "Liberation Mono", "Courier New", monospace;
    font-size: 26px;
    line-height: 36px;
    color: #222;
}

.top-row {
    margin: 20px 64px 0;
    flex-shrink: 0;
    padding-top: 5px;
    border-top: 2px solid #eef2fb;
    height: 34px;
    text-align: right;
    font-size: 20px;
    line-height: 24px;
}

.top-row a {
    color: #999;
    text-decoration: none;
}

.promo {
    margin: 36px 64px 0 188px;
    height: 100px;
    flex-shrink: 0;
    display: flex;
}

.dev-logo {
    flex-shrink: 0;
}

.dev-w3c {
    font-family: "Liberation Sans", sans-serif;
    font-size: 32px;
    fill: #fff;
}

.dev-word {
    font-family: "Liberation Sans", sans-serif;
    font-size: 68px;
    font-weight: bold;
    fill: #fff;
}

.promo-text {
    flex: 1;
    margin-top: -5px;
    padding-right: 4px;
    text-align: center;
}

.promo-text p {
    margin: 0 0 46px;
}

.promo-text a {
    color: #3b5f94;
}

.section-title {
    margin: 87px 0 0;
    border-bottom: 2px dotted #a8a870;
    color: #66981a;
    font-family: "DejaVu Sans", Verdana, sans-serif;
    font-size: 35px;
    font-weight: normal;
    line-height: 34px;
    letter-spacing: .4px;
}

.section-valid {
    margin: 36px 64px 0;
    flex-shrink: 0;
}

.css-dump {
    flex: 1;
    margin: 36px 64px 0;
    padding: 33px 27px 0;
    overflow: hidden;
    background: linear-gradient(#f0f0f0 50%, #dcdcdc);
    font-family: "Liberation Mono", "Courier New", monospace;
    font-size: 26px;
    line-height: 26px;
    color: #111;
}

.css-dump .val {
    color: #666;
}

/* dock */
.desktop {
    flex: 1;
    min-height: 0;
    padding: 10px 70px 0 69px;
}

.dock {
    height: 104px;
    display: flex;
    align-items: flex-start;
    gap: 19.6px;
    padding: 15px 14px 0;
    border: 1px solid #4c4e58;
    border-radius: 30px;
    background: linear-gradient(90deg, #1f2530 0, #2a2a34 350px, #40323a 600px, #4e383d 1100px, #3a2e36 1500px, #242a36 1750px, #27303f 2200px, #6a4440 2400px, #86504a 2741px);
}

.dock-item {
    position: relative;
    width: 66px;
    height: 66px;
    flex-shrink: 0;
    display: flex;
    align-items: center;
    justify-content: center;
}

.dock-item svg {
    flex-shrink: 0;
}

.running::after {
    content: "";
    position: absolute;
    left: 30px;
    top: 77px;
    width: 6px;
    height: 6px;
    border-radius: 50%;
    background: #bcbcc8;
}

.dock-sep {
    width: 2px;
    height: 76px;
    margin: -1px 9px 0;
    background: #6a6c74;
}

.badge {
    position: absolute;
    top: -8px;
    height: 30px;
    border-radius: 15px;
    background: #ee3f3f;
    color: #fff;
    font-size: 19px;
    line-height: 30px;
    text-align: center;
}

.badge-msg {
    right: -8px;
    width: 30px;
}

.badge-mail {
    left: 17px;
    width: 56px;
    font-size: 18px;
}

.badge-set {
    right: -9px;
    width: 30px;
}

.cal-month {
    font-family: "Liberation Sans", sans-serif;
    font-size: 14px;
    font-weight: bold;
    fill: #fff;
    text-anchor: middle;
}

.cal-day {
    font-family: "Liberation Sans", sans-serif;
    font-size: 40px;
    fill: #222;
    text-anchor: middle;
}

.tv-mark {
    font-family: "Liberation Sans", sans-serif;
    font-size: 30px;
    fill: #f2f2f2;
}

.jpeg-label {
    font-family: "Liberation Sans", sans-serif;
    font-size: 13px;
    fill: #888;
    text-anchor: middle;
}
```
